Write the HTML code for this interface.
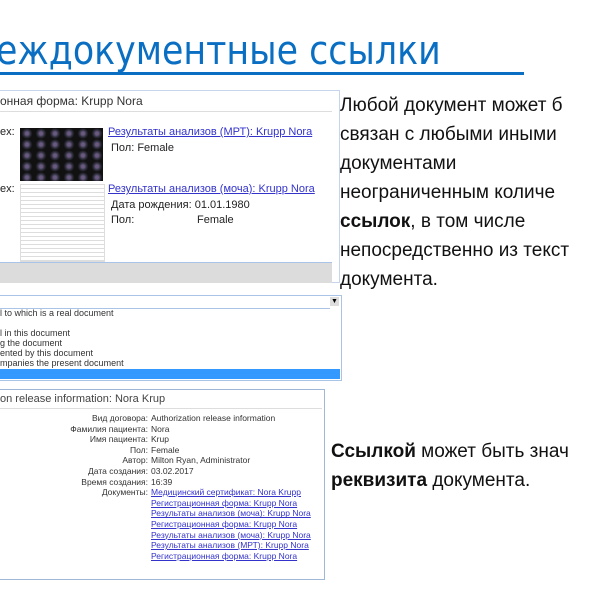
<!DOCTYPE html>
<html><head><meta charset="utf-8"><style>
body{margin:0;width:600px;height:600px;overflow:hidden;background:#fff;position:relative;font-family:"Liberation Sans","DejaVu Sans",sans-serif}
.a{position:absolute;white-space:nowrap}
.t{left:-4px;top:28px;font-size:40px;color:#0a6fc2;font-family:"DejaVu Sans","Liberation Sans",sans-serif;transform:scaleX(0.87);transform-origin:0 0}
.ul{left:0;top:72px;width:524px;height:3px;background:#0a6fc2}
.r{left:340px;font-size:19px;color:#111;line-height:29px}
.box{position:absolute;border:1px solid #a9c4e6;background:#fff}
.s{font-size:11px;color:#222}
.lk{color:#3333cc;text-decoration:underline}
.sm{font-size:9px;color:#333}
.f{font-size:8.5px;line-height:10.6px}
</style></head><body>
<div class="a t">еждокументные ссылки</div>
<div class="a ul"></div>

<div class="box" style="left:-2px;top:90px;width:340px;height:191px;border-color:#c5d6ec"></div>
<div class="a" style="left:0;top:92px;width:332px;height:19px;border-bottom:1px solid #ddd;font-size:12px;color:#333;line-height:19px">онная форма: Krupp Nora</div>
<div class="a s" style="left:0;top:126px">ex:</div>
<div class="a" style="left:20px;top:128px;width:83px;height:53px;background:#111;background-image:radial-gradient(circle,#6a5a80 1.5px,#303040 3.5px,#111 5.5px);background-size:14px 11px"></div>
<div class="a s lk" style="left:108px;top:126px">Результаты анализов (МРТ): Krupp Nora</div>
<div class="a s" style="left:111px;top:142px">Пол: Female</div>
<div class="a s" style="left:0;top:183px">ex:</div>
<div class="a" style="left:20px;top:184px;width:83px;height:76px;background:#fafafa;border:1px solid #ddd;background-image:repeating-linear-gradient(#fff 0 3px,#ddd 3px 4px)"></div>
<div class="a s lk" style="left:108px;top:183px">Результаты анализов (моча): Krupp Nora</div>
<div class="a s" style="left:111px;top:199px">Дата рождения: 01.01.1980</div>
<div class="a s" style="left:111px;top:214px">Пол:</div>
<div class="a s" style="left:197px;top:214px">Female</div>
<div class="a" style="left:0;top:262px;width:332px;height:20px;background:#dcdcdc;border-top:1px solid #a9c4e6"></div>

<div class="box" style="left:-2px;top:295px;width:342px;height:84px"></div>
<div class="a" style="left:0;top:296px;width:330px;height:12px;border-bottom:1px solid #a9c4e6"></div>
<div class="a" style="left:330px;top:297px;width:9px;height:9px;background:#ddd;font-size:7px;text-align:center;line-height:9px">▼</div>
<div class="a sm" style="left:0;top:308px">l to which is a real document</div>
<div class="a sm" style="left:0;top:328px">l in this document</div>
<div class="a sm" style="left:0;top:338px">g the document</div>
<div class="a sm" style="left:0;top:348px">ented by this document</div>
<div class="a sm" style="left:0;top:358px">mpanies the present document</div>
<div class="a" style="left:0;top:369px;width:340px;height:10px;background:#3399ff"></div>

<div class="box" style="left:-2px;top:389px;width:325px;height:189px;border-color:#9fb8d8"></div>
<div class="a" style="left:0;top:390px;width:322px;height:18px;border-bottom:1px solid #ddd;font-size:11px;color:#444;line-height:18px">on release information: Nora Krup</div>
<div class="a f" style="left:0;top:413px;width:148px;text-align:right;color:#333">Вид договора:<br>Фамилия пациента:<br>Имя пациента:<br>Пол:<br>Автор:<br>Дата создания:<br>Время создания:<br>Документы:</div>
<div class="a f" style="left:151px;top:413px;color:#333">Authorization release information<br>Nora<br>Krup<br>Female<br>Milton Ryan, Administrator<br>03.02.2017<br>16:39<br><span class="lk">Медицинский сертификат: Nora Krupp</span><br><span class="lk">Регистрационная форма: Krupp Nora</span><br><span class="lk">Результаты анализов (моча): Krupp Nora</span><br><span class="lk">Регистрационная форма: Krupp Nora</span><br><span class="lk">Результаты анализов (моча): Krupp Nora</span><br><span class="lk">Результаты анализов (МРТ): Krupp Nora</span><br><span class="lk">Регистрационная форма: Krupp Nora</span></div>

<div class="a r" style="top:91px">Любой документ может б<br>связан с любыми иными<br>документами<br>неограниченным количе<br><b>ссылок</b>, в том числе<br>непосредственно из текст<br>документа.</div>
<div class="a r" style="left:331px;top:437px"><b>Ссылкой</b> может быть знач<br><b>реквизита</b> документа.</div>
</body></html>
